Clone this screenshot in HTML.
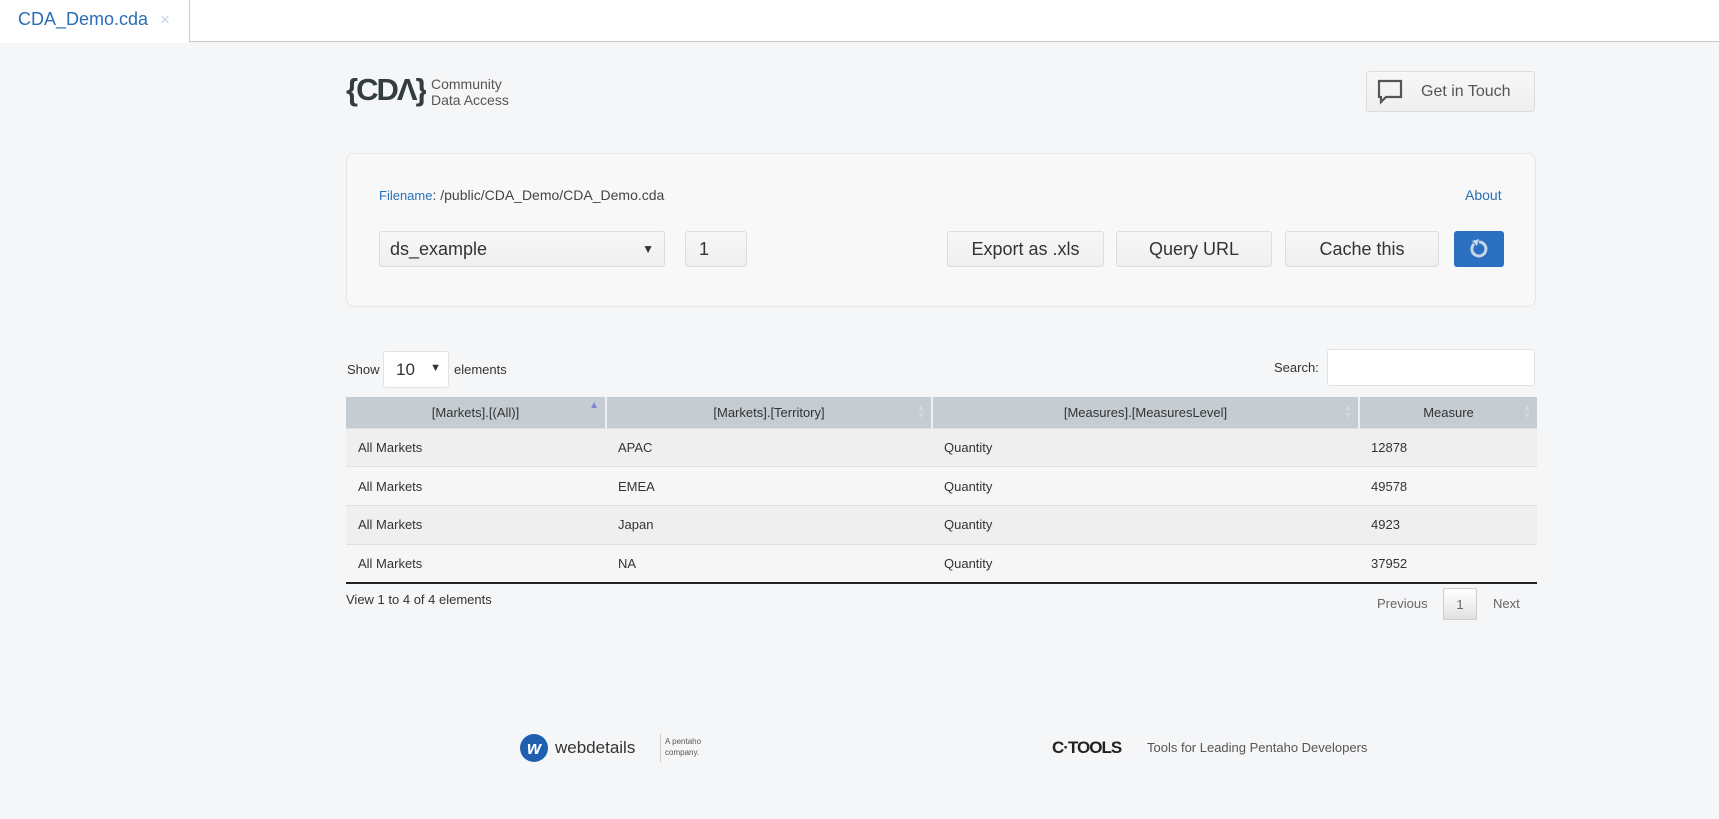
<!DOCTYPE html>
<html><head><style>
*{box-sizing:border-box;margin:0;padding:0}
body{width:1719px;height:819px;background:#f5f6f8;font-family:"Liberation Sans",sans-serif;color:#333;position:relative;overflow:hidden}
.abs{position:absolute}
.tabbar{left:0;top:0;width:1719px;height:42px;background:#fff;border-bottom:1px solid #c8c8c8}
.tab{left:0;top:0;width:190px;height:43px;background:#fff;border-right:1px solid #c8c8c8;border-bottom:1px solid #fff}
.btn{background:linear-gradient(#f7f7f7,#efefef);border:1px solid #ddd;border-radius:3px;font-size:18px;color:#333;display:flex;align-items:center;justify-content:center}
table{border-collapse:collapse;font-size:13px}
th{background:#c5cdd3;height:31px;font-weight:normal;color:#333;border-right:2px solid #eef0f2;position:relative}
td{height:38.7px;padding-left:12px;border-top:1px solid #e0e0e0}
tr.o td{background:#efefef}tr.e td{background:#f6f6f6}
.arr{position:absolute;right:6px;top:7px;color:#d6dadd;font-size:8px;line-height:8px}
</style></head><body>
<div class="abs tabbar"></div>
<div class="abs tab"><span class="abs" style="left:18px;top:9px;font-size:18px;color:#2a6eb5">CDA_Demo.cda</span><span class="abs" style="left:160px;top:10px;font-size:17px;color:#c5d4e6">×</span></div>

<div class="abs" style="left:346px;top:72px;width:80px;font-size:31px;font-weight:bold;color:#333c40;letter-spacing:-2px;white-space:nowrap;overflow:hidden">{CDΛ}</div>
<div class="abs" style="left:431px;top:76px;font-size:14px;line-height:16px;color:#555">Community<br>Data Access</div>

<div class="abs btn" style="left:1366px;top:71px;width:169px;height:41px;font-size:16px;color:#555;justify-content:flex-start">
<svg width="26" height="26" style="margin:0 18px 0 10px" viewBox="0 0 26 26"><path d="M2 2H24V18H9L4 23V18H2Z" fill="none" stroke="#555" stroke-width="2.2"/></svg>Get in Touch</div>

<div class="abs" style="left:346px;top:153px;width:1190px;height:154px;background:#f8f8f8;border:1px solid #e5e6e8;border-radius:8px"></div>
<div class="abs" style="left:379px;top:187px;font-size:14px;color:#444"><span style="color:#2a6eb5;font-size:13px">Filename</span>: /public/CDA_Demo/CDA_Demo.cda</div>
<div class="abs" style="left:1465px;top:187px;font-size:14px;color:#2a6eb5">About</div>
<div class="abs btn" style="left:379px;top:231px;width:286px;height:36px;justify-content:space-between;padding:0 10px">ds_example<span style="font-size:12px">▼</span></div>
<div class="abs btn" style="left:685px;top:231px;width:62px;height:36px;justify-content:flex-start;padding-left:13px">1</div>
<div class="abs btn" style="left:947px;top:231px;width:157px;height:36px">Export as .xls</div>
<div class="abs btn" style="left:1116px;top:231px;width:156px;height:36px">Query URL</div>
<div class="abs btn" style="left:1285px;top:231px;width:154px;height:36px">Cache this</div>
<div class="abs" style="left:1454px;top:231px;width:50px;height:36px;background:#2a6fc0;border-radius:3px;display:flex;align-items:center;justify-content:center">
<svg width="22" height="22" viewBox="0 0 22 22"><path d="M6 6A7 7 0 1 0 11 4" fill="none" stroke="#c8d6e8" stroke-width="3"/><path d="M4 3L11 1L9 8Z" fill="#c8d6e8"/></svg></div>

<div class="abs" style="left:347px;top:362px;font-size:13px">Show</div>
<div class="abs" style="left:383px;top:351px;width:66px;height:37px;background:#fff;border:1px solid #e2e2e2;border-radius:3px;font-size:17px;padding:8px 0 0 12px">10<span style="position:absolute;right:7px;top:10px;font-size:11px">▼</span></div>
<div class="abs" style="left:454px;top:362px;font-size:13px">elements</div>
<div class="abs" style="left:1274px;top:360px;font-size:13px">Search:</div>
<div class="abs" style="left:1327px;top:349px;width:208px;height:37px;background:#fff;border:1px solid #e2e2e2;border-radius:3px"></div>

<table class="abs" style="left:346px;top:397px;width:1191px;border-bottom:2px solid #222">
<tr><th style="width:260px">[Markets].[(All)]<span class="arr" style="color:#7b83d8;font-size:10px;top:5px">▲</span></th><th style="width:326px">[Markets].[Territory]<span class="arr">▲<br>▼</span></th><th style="width:427px">[Measures].[MeasuresLevel]<span class="arr">▲<br>▼</span></th><th style="border-right:0">Measure<span class="arr">▲<br>▼</span></th></tr>
<tr class="o"><td>All Markets</td><td>APAC</td><td>Quantity</td><td>12878</td></tr>
<tr class="e"><td>All Markets</td><td>EMEA</td><td>Quantity</td><td>49578</td></tr>
<tr class="o"><td>All Markets</td><td>Japan</td><td>Quantity</td><td>4923</td></tr>
<tr class="e"><td>All Markets</td><td>NA</td><td>Quantity</td><td>37952</td></tr>
</table>
<div class="abs" style="left:346px;top:592px;font-size:13px">View 1 to 4 of 4 elements</div>
<div class="abs" style="left:1377px;top:596px;font-size:13px;color:#666">Previous</div>
<div class="abs" style="left:1443px;top:588px;width:34px;height:32px;background:linear-gradient(#fff,#e2e2e2);border:1px solid #ccc;border-radius:2px;font-size:13px;color:#666;text-align:center;padding-top:8px">1</div>
<div class="abs" style="left:1493px;top:596px;font-size:13px;color:#666">Next</div>

<div class="abs" style="left:520px;top:734px;width:28px;height:28px;border-radius:50%;background:#1f5fb0;color:#fff;font-weight:bold;font-style:italic;font-size:18px;text-align:center;line-height:28px">w</div>
<div class="abs" style="left:555px;top:738px;font-size:17px;color:#333">webdetails</div>
<div class="abs" style="left:660px;top:734px;width:1px;height:28px;background:#ccc"></div>
<div class="abs" style="left:665px;top:736px;font-size:8px;line-height:11px;color:#555">A pentaho<br>company.</div>
<div class="abs" style="left:1052px;top:738px;font-size:17px;font-weight:bold;color:#222;letter-spacing:-1px">C·TOOLS</div>
<div class="abs" style="left:1147px;top:740px;font-size:13px;color:#555">Tools for Leading Pentaho Developers</div>
</body></html>
